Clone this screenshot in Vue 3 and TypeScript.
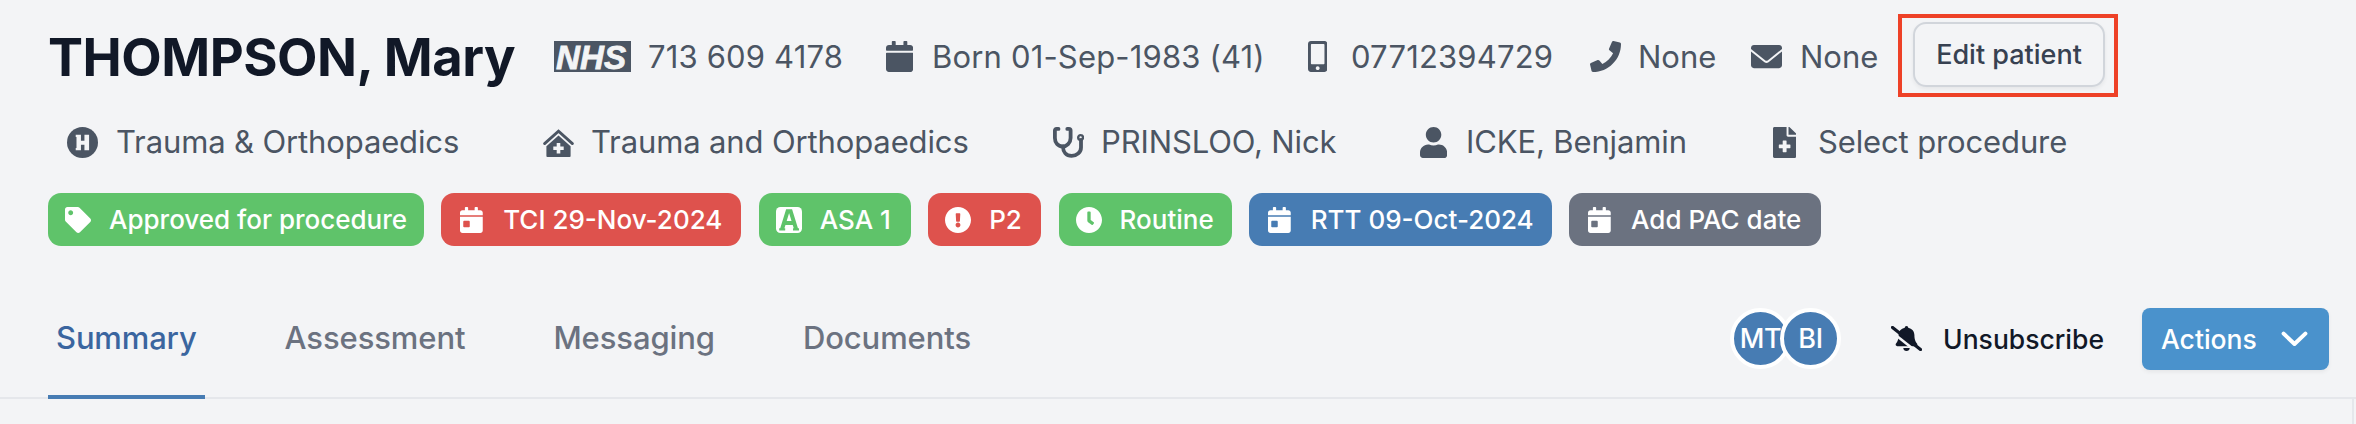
<script setup lang="ts">
interface Tag {
  label: string
  tone: 'green' | 'red' | 'blue' | 'grey'
  icon: 'tag' | 'day' | 'asa' | 'alert' | 'clock'
}

const tags: Tag[] = [
  { label: 'Approved for procedure', tone: 'green', icon: 'tag' },
  { label: 'TCI 29-Nov-2024', tone: 'red', icon: 'day' },
  { label: 'ASA 1', tone: 'green', icon: 'asa' },
  { label: 'P2', tone: 'red', icon: 'alert' },
  { label: 'Routine', tone: 'green', icon: 'clock' },
  { label: 'RTT 09-Oct-2024', tone: 'blue', icon: 'day' },
  { label: 'Add PAC date', tone: 'grey', icon: 'day' },
]

const tabs: string[] = ['Summary', 'Assessment', 'Messaging', 'Documents']
const members: string[] = ['MT', 'BI']
</script>

<template>
  <main class="page">
    <header class="identity">
      <h1 class="name">THOMPSON, Mary</h1>
      <svg class="nhs" viewBox="0 0 77 31">
        <rect width="77" height="31" />
        <text x="2" y="28" textLength="70" lengthAdjust="spacingAndGlyphs">NHS</text>
      </svg>
      <span class="info">713 609 4178</span>
      <svg class="icon" viewBox="0 0 448 512" preserveAspectRatio="none"><path d="M12 192h424c6.6 0 12 5.4 12 12v260c0 26.5-21.5 48-48 48H48c-26.5 0-48-21.5-48-48V204c0-6.6 5.4-12 12-12zm436-44v-36c0-26.5-21.5-48-48-48h-48V12c0-6.6-5.4-12-12-12h-40c-6.6 0-12 5.4-12 12v52H160V12c0-6.6-5.4-12-12-12h-40c-6.6 0-12 5.4-12 12v52H48C21.5 64 0 85.5 0 112v36c0 6.6 5.4 12 12 12h424c6.6 0 12-5.4 12-12z" /></svg>
      <span class="info">Born 01-Sep-1983 (41)</span>
      <svg class="icon" viewBox="0 0 320 512" preserveAspectRatio="none"><path d="M272 0H48C21.5 0 0 21.5 0 48v416c0 26.5 21.5 48 48 48h224c26.5 0 48-21.5 48-48V48c0-26.5-21.5-48-48-48zM160 480c-17.7 0-32-14.3-32-32s14.3-32 32-32 32 14.3 32 32-14.3 32-32 32zm112-108c0 6.6-5.4 12-12 12H60c-6.6 0-12-5.4-12-12V60c0-6.6 5.4-12 12-12h200c6.6 0 12 5.4 12 12v312z" /></svg>
      <span class="info">07712394729</span>
      <svg class="icon" viewBox="0 0 512 512"><path d="M493.4 24.6l-104-24c-11.3-2.6-22.9 3.3-27.5 13.9l-48 112c-4.2 9.8-1.4 21.3 6.9 28l60.6 49.6c-36 76.7-98.9 140.5-177.2 177.2l-49.6-60.6c-6.8-8.3-18.2-11.1-28-6.9l-112 48C3.9 366.5-2 378.1.6 389.4l24 104C27.1 504.2 36.7 512 48 512c256.1 0 464-207.5 464-464 0-11.2-7.7-20.9-18.6-23.4z" /></svg>
      <span class="info plain">None</span>
      <svg class="icon" viewBox="0 0 512 512">
        <path d="M48 64h416c26 0 48 20 48 46v22L280 318q-24 18-48 0L0 132v-22c0-26 22-46 48-46z" />
        <path d="M0 172 222 350q34 24 68 0l222-178v230c0 26-22 46-48 46H48c-26 0-48-20-48-46z" />
      </svg>
      <span class="info plain">None</span>
      <div class="highlight"><button class="edit" type="button">Edit patient</button></div>
    </header>

    <section class="care">
      <svg class="icon" viewBox="0 0 32 32">
        <circle cx="16" cy="16" r="16" />
        <path class="knock" d="M9 8h5.400v6.200h3.600V8h4.800v16H18v-5.800h-3.600V24H9v-2.400h.8V10.400H9z" />
      </svg>
      <span class="info">Trauma &amp; Orthopaedics</span>
      <svg class="icon house" viewBox="0 0 31 28">
        <path d="M1.6 14.6 15.5 2.2l13.9 12.4" fill="none" stroke="currentColor" stroke-width="2.8" stroke-linecap="round" />
        <path d="M15.5 6.4 27.6 17.2V27a1 1 0 0 1-1 1H4.4a1 1 0 0 1-1-1V17.2z" />
        <path class="knock" d="M13.7 14h3.6v3.4h3.4v3.6h-3.4v3.6h-3.6V21h-3.4v-3.6h3.4z" />
      </svg>
      <span class="info">Trauma and Orthopaedics</span>
      <svg class="icon" viewBox="0 0 31 31">
        <g fill="none" stroke="currentColor" stroke-width="3.8" stroke-linecap="round" stroke-linejoin="round">
          <path d="M5.5 1.9H3.6Q1.9 1.9 1.9 3.6V11c0 4.8 3.2 8.5 7.5 8.5s8.2-3.700 8.200-8.500V3.600q0-1.700-1.700-1.700H14.300" />
          <path d="M10 19.500c0 5.600 3.200 9.400 8.600 9.400s9.400-3.800 9.400-8.400V13" />
        </g>
        <circle cx="27.600" cy="10.500" r="2.400" fill="none" stroke="currentColor" stroke-width="2.400" />
      </svg>
      <span class="info">PRINSLOO, Nick</span>
      <svg class="icon" viewBox="0 0 448 512" preserveAspectRatio="none"><path d="M224 256c70.7 0 128-57.3 128-128S294.7 0 224 0 96 57.3 96 128s57.3 128 128 128zm89.6 32h-16.7c-22.2 10.2-46.9 16-72.9 16s-50.6-5.8-72.9-16h-16.7C60.2 288 0 348.2 0 422.4V464c0 26.5 21.5 48 48 48h352c26.5 0 48-21.5 48-48v-41.6c0-74.2-60.2-134.4-134.4-134.4z" /></svg>
      <span class="info">ICKE, Benjamin</span>
      <svg class="icon" viewBox="0 0 384 512" preserveAspectRatio="none"><path d="M377 105L279.1 7c-4.5-4.5-10.6-7-17-7H256v128h128v-6.1c0-6.3-2.5-12.4-7-16.9zm-153 31V0H24C10.7 0 0 10.7 0 24v464c0 13.3 10.7 24 24 24h336c13.3 0 24-10.7 24-24V160H248c-13.2 0-24-10.8-24-24zm64 160v48c0 4.4-3.6 8-8 8h-56v56c0 4.4-3.6 8-8 8h-48c-4.4 0-8-3.6-8-8v-56h-56c-4.4 0-8-3.6-8-8v-48c0-4.4 3.6-8 8-8h56v-56c0-4.4 3.6-8 8-8h48c4.4 0 8 3.6 8 8v56h56c4.4 0 8 3.6 8 8z" /></svg>
      <span class="info">Select procedure</span>
    </section>

    <section class="tags">
      <span v-for="tag in tags" :key="tag.label" class="tag" :class="[tag.tone, `with-${tag.icon}`]">
        <svg v-if="tag.icon === 'tag'" viewBox="0 0 512 512"><path d="M0 252.118V48C0 21.49 21.49 0 48 0h204.118a48 48 0 0 1 33.941 14.059l211.882 211.882c18.745 18.745 18.745 49.137 0 67.882L293.823 497.941c-18.745 18.745-49.137 18.745-67.882 0L14.059 286.059A48 48 0 0 1 0 252.118zM112 64c-26.51 0-48 21.49-48 48s21.49 48 48 48 48-21.49 48-48-21.49-48-48-48z" /></svg>
        <svg v-else-if="tag.icon === 'day'" viewBox="0 0 448 512"><path d="M0 464c0 26.5 21.5 48 48 48h352c26.5 0 48-21.5 48-48V192H0v272zm64-176c0-8.8 7.2-16 16-16h96c8.8 0 16 7.2 16 16v96c0 8.8-7.2 16-16 16H80c-8.8 0-16-7.2-16-16v-96zM400 64h-48V16c0-8.8-7.2-16-16-16h-32c-8.8 0-16 7.2-16 16v48H160V16c0-8.8-7.2-16-16-16h-32c-8.8 0-16 7.2-16 16v48H48C21.5 64 0 85.5 0 112v48h448v-48c0-26.5-21.5-48-48-48z" /></svg>
        <svg v-else-if="tag.icon === 'asa'" viewBox="0 0 26 26">
          <rect width="26" height="26" rx="4.5" />
          <g class="letter">
            <path d="M6 22.400 11.600 4.200h3L20.200 22.400M8.600 16h9" />
            <path d="M3.200 22.400h6M17 22.400h6" />
          </g>
        </svg>
        <svg v-else-if="tag.icon === 'alert'" viewBox="8 8 496 496"><path d="M504 256c0 136.997-111.043 248-248 248S8 392.997 8 256C8 119.083 119.043 8 256 8s248 111.083 248 248zm-248 50c-25.405 0-46 20.595-46 46s20.595 46 46 46 46-20.595 46-46-20.595-46-46-46zm-43.673-165.346l7.418 136c.347 6.364 5.609 11.346 11.982 11.346h48.546c6.373 0 11.635-4.982 11.982-11.346l7.418-136c.375-6.874-5.098-12.654-11.982-12.654h-63.383c-6.884 0-12.356 5.78-11.981 12.654z" /></svg>
        <svg v-else viewBox="8 8 496 496"><path d="M256,8C119,8,8,119,8,256S119,504,256,504,504,393,504,256,393,8,256,8Zm92.49,313h0l-20,25a16,16,0,0,1-22.49,2.5h0l-67-49.72a40,40,0,0,1-15-31.23V112a16,16,0,0,1,16-16h32a16,16,0,0,1,16,16V256l58,42.5A16,16,0,0,1,348.49,321Z" /></svg>
        {{ tag.label }}
      </span>
    </section>

    <nav class="bar">
      <a v-for="(tab, i) in tabs" :key="tab" class="tab" :class="{ active: i === 0 }">{{ tab }}</a>
      <div class="tools">
        <div class="members">
          <span v-for="m in members" :key="m" class="avatar">{{ m }}</span>
        </div>
        <button class="unsubscribe" type="button">
          <svg viewBox="0 0 31 25">
            <path d="M15.5 0c1.1 0 1.7.7 1.7 1.8C21 2.6 23.4 5.4 23.4 9c0 5 1.4 7 2.6 8.6.8 1.1.2 2.6-1.3 2.6H6.3c-1.5 0-2.1-1.5-1.3-2.6C6.2 16 7.6 14 7.6 9c0-3.6 2.4-6.4 6.2-7.200 0-1.100.6-1.800 1.700-1.800z" />
            <path d="M12.3 21.9h6.4c0 1.7-1.4 3.1-3.2 3.1s-3.2-1.4-3.2-3.1z" />
            <path class="gap" d="M-1 4.600 27 26.800" />
            <path class="slash" d="M1.5 1.4 29.5 23.6" />
          </svg>
          Unsubscribe
        </button>
        <button class="actions" type="button">
          Actions
          <svg viewBox="0 0 27 16"><path d="M2.6 2.6 13.5 13 24.4 2.6" /></svg>
        </button>
      </div>
    </nav>
    <div class="panel"></div>
  </main>
</template>

<style>
body {
  background: #f3f4f6;
}
</style>

<style scoped>
.page {
  width: 2356px;
  height: 424px;
  overflow: hidden;
  display: flex;
  flex-direction: column;
  box-sizing: border-box;
  background: #f3f4f6;
  color: #4b5563;
  font-family: Inter, "Liberation Sans", sans-serif;
  font-size: 31px;
  white-space: nowrap;
}
svg {
  display: block;
  flex: none;
  fill: currentColor;
}
button {
  font-family: inherit;
  padding: 0;
  margin: 0;
  border: 0;
  background: none;
}
.identity {
  display: grid;
  height: 113px;
  padding-left: 48px;
  align-items: center;
  grid-template-columns: 506px 94px 238px 46px 376px 43px 239px 48px 113px 49px 98px 221px;
}
.name {
  margin: 0;
  font-size: 52.5px;
  font-weight: 700;
  letter-spacing: -0.5px;
  color: #111827;
}
.nhs {
  width: 77px;
  height: 31px;
}
.nhs text {
  fill: #f3f4f6;
  stroke: #f3f4f6;
  stroke-width: 0.8;
  font: italic 700 34px "Liberation Sans", Arial, sans-serif;
}
.identity .icon,
.care .icon {
  height: 31px;
}
.info {
  letter-spacing: 0.17px;
}
.info.plain {
  letter-spacing: 0;
}
.highlight {
  width: 220px;
  height: 83px;
  margin-bottom: 2px;
  padding: 4px 0 0 11px;
  box-sizing: border-box;
  border: 4px solid #ee4127;
}
.edit {
  width: 192px;
  height: 65px;
  border: 2px solid #d1d5db;
  border-radius: 13px;
  box-shadow: 0 2px 4px rgba(0, 0, 0, 0.06);
  color: #374151;
  font-size: 27px;
  font-weight: 500;
}
.care {
  display: grid;
  height: 57px;
  padding-left: 67px;
  align-items: center;
  grid-template-columns: 49px 427px 48px 462px 48px 319px 46px 307px 45px 260px;
}
.care .icon {
  position: relative;
  top: 1px;
}
.care .house {
  height: 28px;
}
.care .info {
  letter-spacing: -0.13px;
}
.knock {
  fill: #f3f4f6;
}
.tags {
  display: grid;
  height: 53px;
  margin-top: 23px;
  padding-left: 48px;
  gap: 17.4px;
  grid-template-columns: 376px 300px 152px 113px 173px 303px 252px;
}
.tag {
  display: flex;
  align-items: center;
  padding-left: 17px;
  border-radius: 13px;
  color: #fff;
  font-size: 26px;
  font-weight: 500;
}
.tag svg {
  height: 26px;
  margin-right: 18px;
}
.with-day {
  padding-left: 19px;
}
.tag.with-day svg {
  margin-right: 20px;
}
.green { background: #5fc36a; }
.red { background: #de524d; }
.blue { background: #477cb3; }
.grey { background: #6b7280; }
.letter path {
  fill: none;
  stroke: #5fc36a;
  stroke-width: 4;
}
.letter path:last-child {
  stroke-width: 2.4;
}
.bar {
  display: flex;
  height: 121px;
  margin-top: 32px;
  padding-left: 48px;
  padding-right: 27px;
  box-shadow: inset 0 -2px #e5e7eb;
}
.tab {
  display: flex;
  align-items: center;
  box-sizing: border-box;
  height: 121px;
  margin-right: 72px;
  padding: 2px 8px 0;
  border-bottom: 4px solid transparent;
  color: #6b7280;
  font-weight: 500;
  letter-spacing: -0.1px;
}
.tab.active {
  color: #3a659f;
  border-bottom-color: #477cb3;
  letter-spacing: -0.15px;
}
.tools {
  display: flex;
  align-items: center;
  margin-left: auto;
}
.members {
  display: flex;
  margin-right: 50px;
}
.avatar {
  display: flex;
  align-items: center;
  justify-content: center;
  width: 53px;
  height: 53px;
  border: 4px solid #fff;
  border-radius: 50%;
  background: #477cb3;
  color: #fff;
  font-size: 27px;
  font-weight: 500;
  letter-spacing: -0.3px;
}
.avatar + .avatar {
  margin-left: -11px;
}
.unsubscribe {
  display: flex;
  align-items: center;
  margin-right: 38px;
  color: #111827;
  font-size: 26.5px;
  font-weight: 500;
}
.unsubscribe svg {
  width: 31px;
  height: 25px;
  margin-right: 21px;
}
.gap {
  fill: none;
  stroke: #f3f4f6;
  stroke-width: 2.6;
}
.slash {
  fill: none;
  stroke: currentColor;
  stroke-width: 3.2;
  stroke-linecap: round;
}
.actions {
  display: flex;
  align-items: center;
  justify-content: space-between;
  box-sizing: border-box;
  width: 187px;
  height: 62px;
  padding: 0 21px 0 19px;
  border-radius: 8px;
  background: #4a92cc;
  box-shadow: 0 2px 4px rgba(0, 0, 0, 0.06);
  color: #fff;
  font-size: 26.5px;
  font-weight: 500;
}
.actions svg {
  width: 27px;
  height: 16px;
  fill: none;
  stroke: currentColor;
  stroke-width: 4;
  stroke-linecap: round;
  stroke-linejoin: round;
}
.panel {
  flex: 1;
  margin-right: 2px;
  border-right: 2px solid #e5e7eb;
}
</style>
